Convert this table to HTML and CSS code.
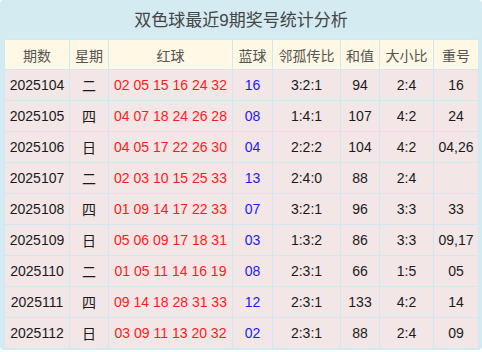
FILE: index.html
```html
<!DOCTYPE html>
<html lang="zh">
<head>
<meta charset="utf-8">
<link rel="stylesheet" href="styles.css">
</head>
<body>
<div class="panel">
  <div class="title">双色球最近9期奖号统计分析</div>
  <table class="stats">
    <colgroup>
      <col class="c1"><col class="c2"><col class="c3"><col class="c4"><col class="c5"><col class="c6"><col class="c7"><col class="c8">
    </colgroup>
    <thead>
      <tr><th>期数</th><th>星期</th><th>红球</th><th>蓝球</th><th>邻孤传比</th><th>和值</th><th>大小比</th><th>重号</th></tr>
    </thead>
    <tbody>
      <tr><td>2025104</td><td>二</td><td class="red">02 05 15 16 24 32</td><td class="blue">16</td><td>3:2:1</td><td>94</td><td>2:4</td><td>16</td></tr>
      <tr><td>2025105</td><td>四</td><td class="red">04 07 18 24 26 28</td><td class="blue">08</td><td>1:4:1</td><td>107</td><td>4:2</td><td>24</td></tr>
      <tr><td>2025106</td><td>日</td><td class="red">04 05 17 22 26 30</td><td class="blue">04</td><td>2:2:2</td><td>104</td><td>4:2</td><td>04,26</td></tr>
      <tr><td>2025107</td><td>二</td><td class="red">02 03 10 15 25 33</td><td class="blue">13</td><td>2:4:0</td><td>88</td><td>2:4</td><td></td></tr>
      <tr><td>2025108</td><td>四</td><td class="red">01 09 14 17 22 33</td><td class="blue">07</td><td>3:2:1</td><td>96</td><td>3:3</td><td>33</td></tr>
      <tr><td>2025109</td><td>日</td><td class="red">05 06 09 17 18 31</td><td class="blue">03</td><td>1:3:2</td><td>86</td><td>3:3</td><td>09,17</td></tr>
      <tr><td>2025110</td><td>二</td><td class="red">01 05 11 14 16 19</td><td class="blue">08</td><td>2:3:1</td><td>66</td><td>1:5</td><td>05</td></tr>
      <tr><td>2025111</td><td>四</td><td class="red">09 14 18 28 31 33</td><td class="blue">12</td><td>2:3:1</td><td>133</td><td>4:2</td><td>14</td></tr>
      <tr><td>2025112</td><td>日</td><td class="red">03 09 11 13 20 32</td><td class="blue">02</td><td>2:3:1</td><td>88</td><td>2:4</td><td>09</td></tr>
    </tbody>
  </table>
</div>
</body>
</html>
```

FILE: styles.css
```css
html, body {
  margin: 0;
  padding: 0;
  background: #ffffff;
}
body {
  font-family: "Liberation Sans", Arial, "Noto Sans CJK SC", sans-serif;
}
.panel {
  width: 482px;
  height: 350px;
  box-sizing: border-box;
  background: #d4ebf2;
  border-radius: 4px;
  padding: 0 4px;
}
.title {
  height: 39px;
  line-height: 42px;
  text-align: center;
  font-size: 17px;
  color: #444444;
}
.stats {
  width: 474px;
  border-collapse: collapse;
  table-layout: fixed;
}
.c1 { width: 65px; }
.c2 { width: 39px; }
.c3 { width: 124px; }
.c4 { width: 40px; }
.c5 { width: 68px; }
.c6 { width: 39px; }
.c7 { width: 54px; }
.c8 { width: 45px; }
.stats th, .stats td {
  border: 1px solid #d0e8f1;
  padding: 0;
  text-align: center;
  white-space: nowrap;
  font-size: 14px;
}
.stats th {
  height: 29px;
  background: #fff8e4;
  font-weight: normal;
  color: #555555;
}
.stats td {
  height: 30px;
  background: #f3e6e7;
  color: #1a1a1a;
}
.stats td.red { color: #ff1a1a; }
.stats td.blue { color: #1a1aff; }
```
